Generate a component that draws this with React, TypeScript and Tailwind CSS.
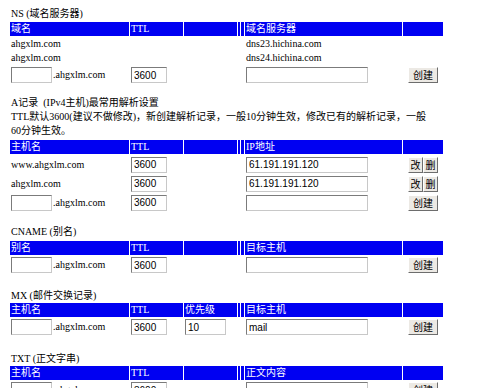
import { ReactNode } from "react";

const serif = "font-['Liberation_Serif','Noto_Sans_CJK_SC',serif]";

const HeaderRow = ({ cells, className }: { cells: string[]; className?: string }) => (
  <div className={`flex gap-px h-[14px] text-white leading-[14px] ${className ?? ""}`}>
    <div className="w-[119px] bg-[#0000f2] pl-[1px]">{cells[0]}</div>
    <div className="w-[53px] bg-[#0000f2] pl-[1px]">{cells[1]}</div>
    <div className="w-[53px] bg-[#0000f2] pl-[1px]">{cells[2]}</div>
    <div className="w-[2px] bg-[#0000f2]"></div>
    <div className="w-[3px] bg-[#0000f2]"></div>
    <div className="w-[157px] bg-[#0000f2] pl-[1px]">{cells[3]}</div>
    <div className="w-[40px] bg-[#0000f2]"></div>
  </div>
);

const Field = ({ value, width }: { value?: string; width: string }) => (
  <input
    readOnly
    defaultValue={value}
    className={`${width} h-[16px] px-[2px] bg-white text-[10px] text-black font-['Liberation_Sans',sans-serif] border border-t-[#7b7b7b] border-l-[#7b7b7b] border-r-[#c8c8c8] border-b-[#c8c8c8] outline-none`}
  />
);

const Btn = ({ label, w }: { label: string; w: string }) => (
  <button className={`${w} h-[16px] text-[10px] leading-[14px] bg-[#ece9e4] text-black border border-t-white border-l-white border-r-[#6d6d6d] border-b-[#6d6d6d] font-['Noto_Sans_CJK_SC',sans-serif]`}>
    {label}
  </button>
);

const DataRow = ({
  c1,
  c2,
  c3,
  c4,
  c5,
  className,
}: {
  c1?: ReactNode;
  c2?: ReactNode;
  c3?: ReactNode;
  c4?: ReactNode;
  c5?: ReactNode;
  className?: string;
}) => (
  <div className={`flex gap-px items-center ${className ?? ""}`}>
    <div className="w-[119px] pl-[1px] flex items-center">{c1}</div>
    <div className="w-[53px] pl-[1px] flex items-center">{c2}</div>
    <div className="w-[53px] pl-[1px] flex items-center">{c3}</div>
    <div className="w-[2px]"></div>
    <div className="w-[3px]"></div>
    <div className="w-[157px] pl-[1px] flex items-center">{c4}</div>
    <div className="w-[40px] flex justify-center items-center">{c5}</div>
  </div>
);

const NewHost = () => (
  <>
    <Field width="w-[41px]" />
    <span className="ml-[1px]">.ahgxlm.com</span>
  </>
);

const EditBtns = () => (
  <div className="flex">
    <Btn label="改" w="w-[15px]" />
    <Btn label="删" w="w-[15px]" />
  </div>
);

export default function App() {
  return (
    <div className={`w-[488px] h-[388px] overflow-hidden bg-white text-black text-[10px] leading-[14px] pl-[10px] pt-[7px] ${serif}`}>
      {/* NS */}
      <div className="pl-[1px] h-[14px]">NS (域名服务器)</div>
      <HeaderRow className="mt-[1px]" cells={["域名", "TTL", "", "域名服务器"]} />
      <DataRow className="mt-[1px] h-[14px]" c1="ahgxlm.com" c4="dns23.hichina.com" />
      <DataRow className="h-[14px]" c1="ahgxlm.com" c4="dns24.hichina.com" />
      <DataRow
        className="mt-[2px] h-[16px]"
        c1={<NewHost />}
        c2={<Field width="w-[36px]" value="3600" />}
        c4={<Field width="w-[122px]" />}
        c5={<Btn label="创建" w="w-[30px]" />}
      />

      {/* A */}
      <div className="pl-[1px] mt-[13px] h-[14px]">A记录&nbsp;&nbsp;(IPv4主机)最常用解析设置</div>
      <div className="pl-[1px] leading-[14px]">
        TTL默认3600(建议不做修改)，新创建解析记录，一般10分钟生效，修改已有的解析记录，一般
        <br />
        60分钟生效。
      </div>
      <HeaderRow className="mt-[2px]" cells={["主机名", "TTL", "", "IP地址"]} />
      <DataRow
        className="h-[19px] mt-[1px]"
        c1="www.ahgxlm.com"
        c2={<Field width="w-[36px]" value="3600" />}
        c4={<Field width="w-[122px]" value="61.191.191.120" />}
        c5={<EditBtns />}
      />
      <DataRow
        className="h-[19px]"
        c1="ahgxlm.com"
        c2={<Field width="w-[36px]" value="3600" />}
        c4={<Field width="w-[122px]" value="61.191.191.120" />}
        c5={<EditBtns />}
      />
      <DataRow
        className="h-[19px]"
        c1={<NewHost />}
        c2={<Field width="w-[36px]" value="3600" />}
        c4={<Field width="w-[122px]" />}
        c5={<Btn label="创建" w="w-[30px]" />}
      />

      {/* CNAME */}
      <div className="pl-[1px] mt-[13px] h-[14px]">CNAME (别名)</div>
      <HeaderRow className="mt-[2px]" cells={["别名", "TTL", "", "目标主机"]} />
      <DataRow
        className="mt-[2px] h-[16px]"
        c1={<NewHost />}
        c2={<Field width="w-[36px]" value="3600" />}
        c4={<Field width="w-[122px]" />}
        c5={<Btn label="创建" w="w-[30px]" />}
      />

      {/* MX */}
      <div className="pl-[1px] mt-[16px] h-[14px]">MX (邮件交换记录)</div>
      <HeaderRow cells={["主机名", "TTL", "优先级", "目标主机"]} />
      <DataRow
        className="mt-[2px] h-[16px]"
        c1={<NewHost />}
        c2={<Field width="w-[36px]" value="3600" />}
        c3={<Field width="w-[41px]" value="10" />}
        c4={<Field width="w-[122px]" value="mail" />}
        c5={<Btn label="创建" w="w-[30px]" />}
      />

      {/* TXT */}
      <div className="pl-[1px] mt-[17px] h-[14px]">TXT (正文字串)</div>
      <HeaderRow cells={["主机名", "TTL", "", "正文内容"]} />
      <DataRow
        className="mt-[2px] h-[16px]"
        c1={<NewHost />}
        c2={<Field width="w-[36px]" value="3600" />}
        c4={<Field width="w-[122px]" />}
        c5={<Btn label="创建" w="w-[30px]" />}
      />
    </div>
  );
}
